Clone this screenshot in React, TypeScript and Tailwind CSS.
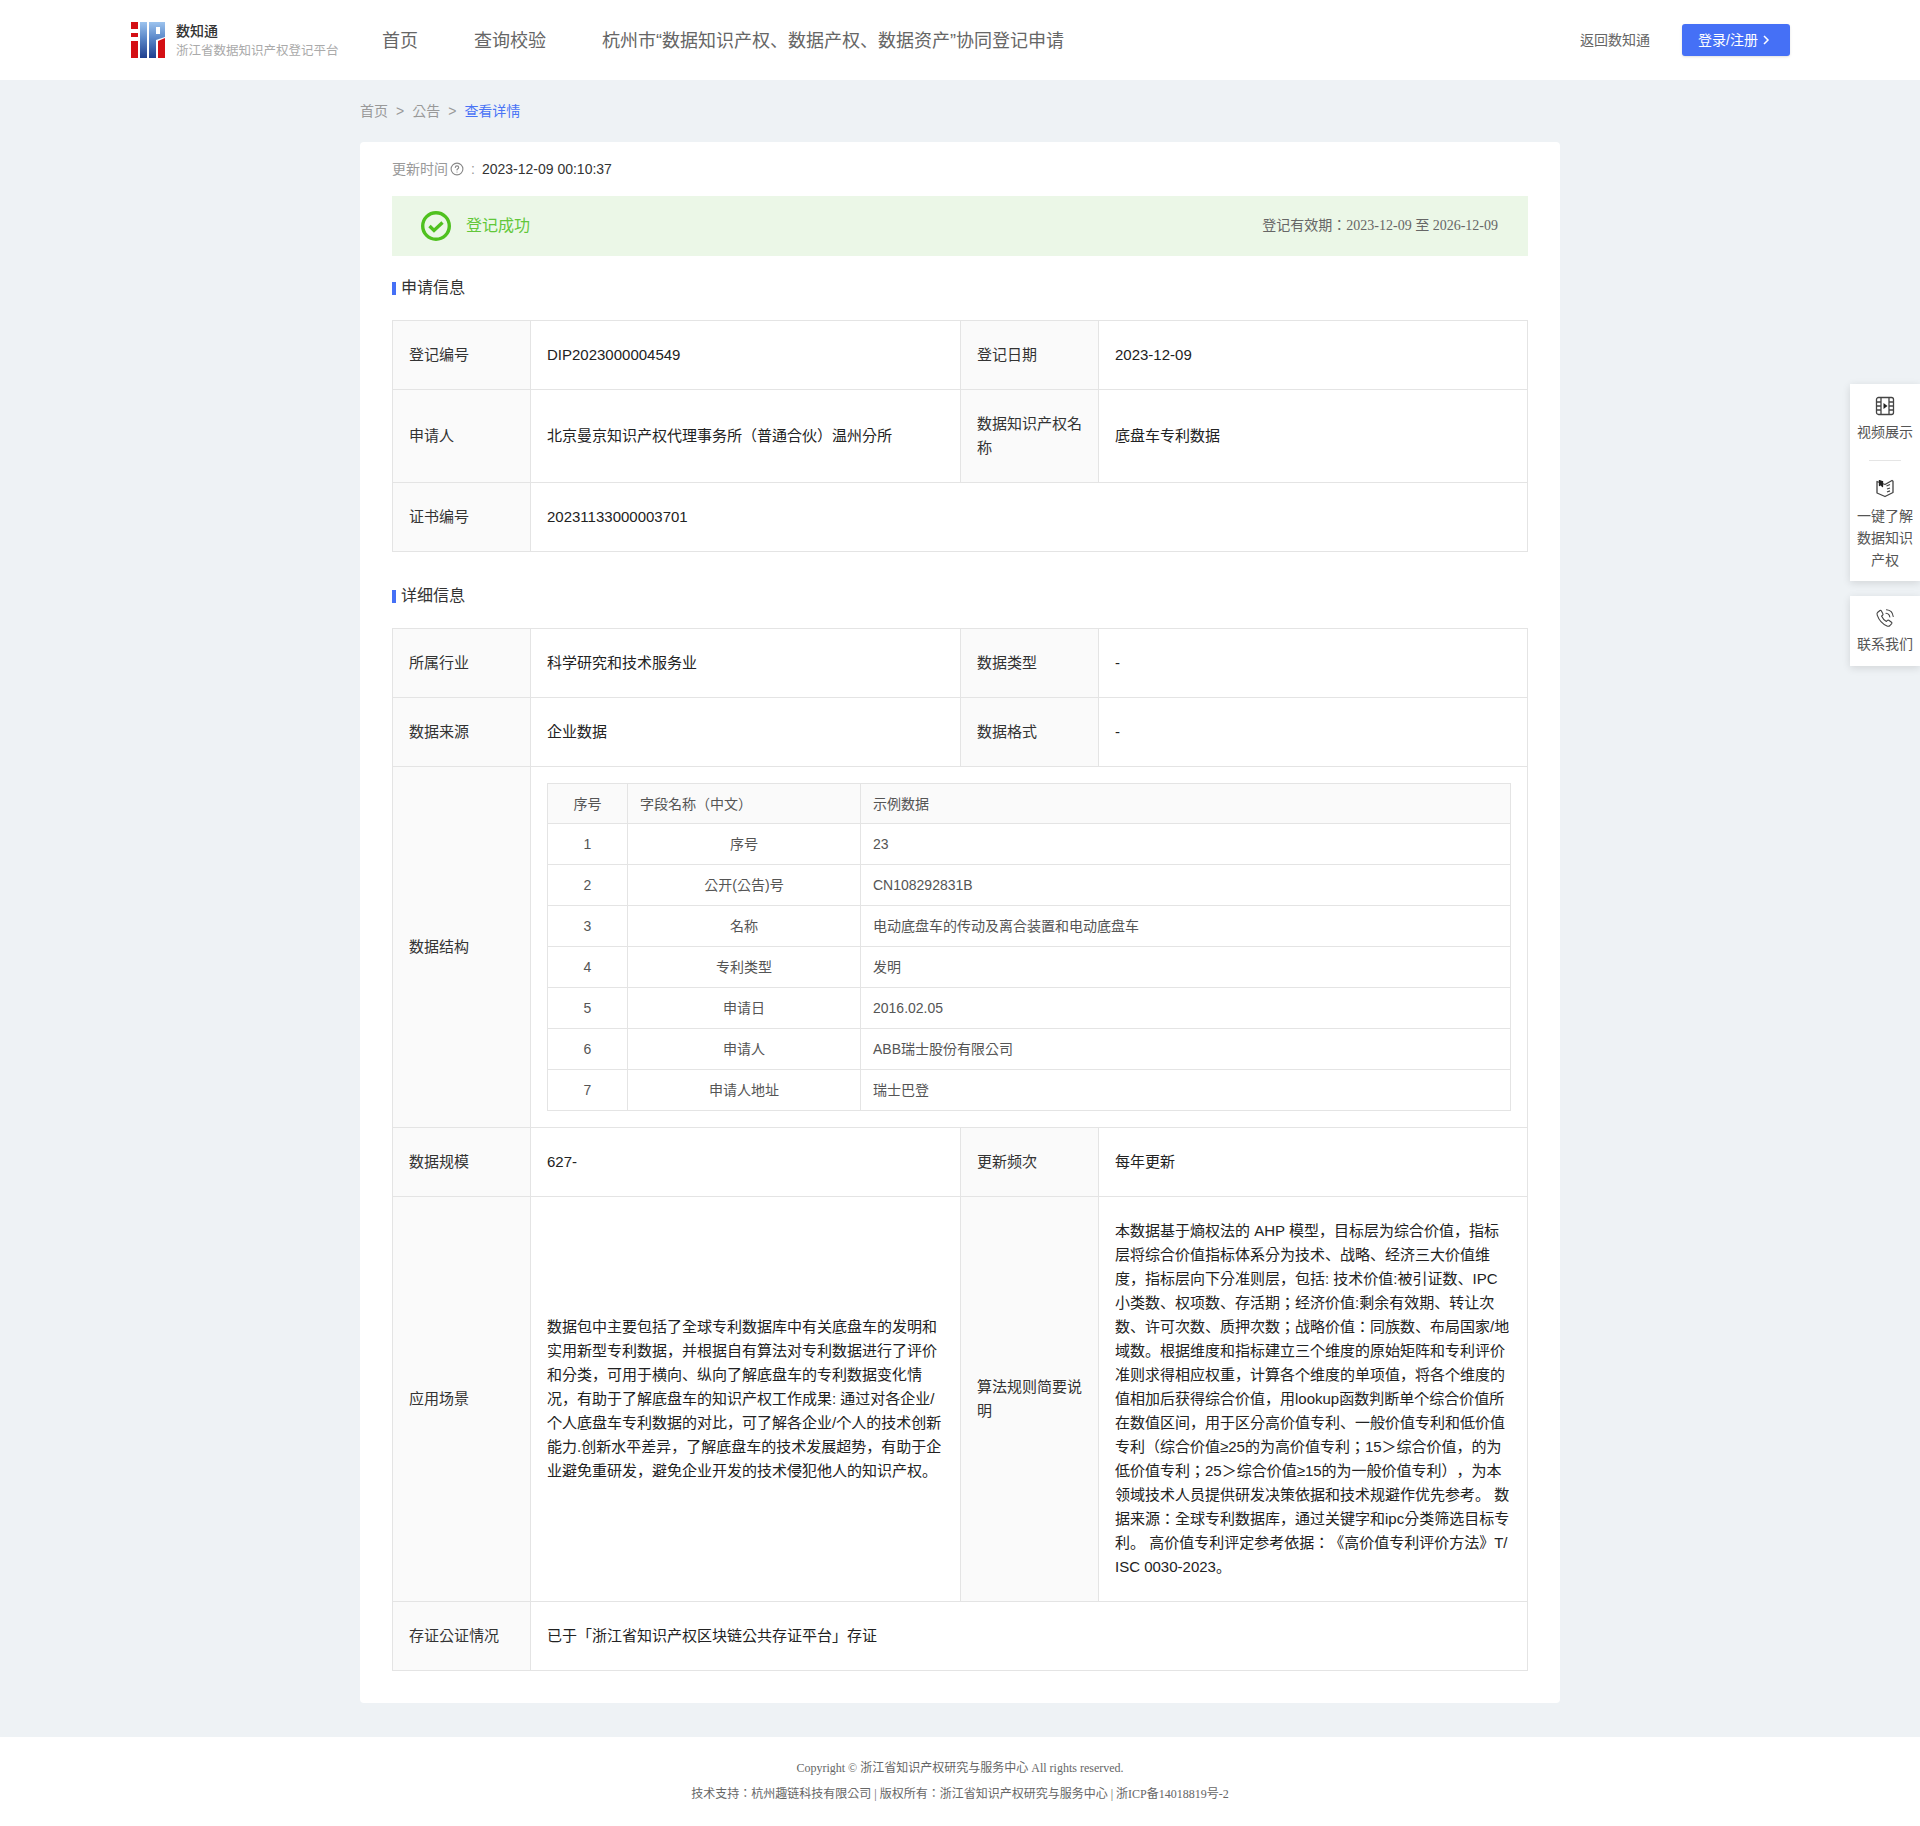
import React from "react";

const Th = ({ children, rowSpan, colSpan }: { children: React.ReactNode; rowSpan?: number; colSpan?: number }) => (
  <td rowSpan={rowSpan} colSpan={colSpan} className="border border-[#e4e4e4] bg-[#fafafa] px-4 py-[22px] text-[15px] leading-6 text-[#333] align-middle">{children}</td>
);
const Td = ({ children, colSpan }: { children: React.ReactNode; colSpan?: number }) => (
  <td colSpan={colSpan} className="border border-[#e4e4e4] bg-white px-4 py-[22px] text-[15px] leading-6 text-[#222] align-middle">{children}</td>
);

const Cols = () => (
  <colgroup>
    <col className="w-[138px]" />
    <col className="w-[430px]" />
    <col className="w-[138px]" />
    <col className="w-[429px]" />
  </colgroup>
);

const Section = ({ title }: { title: string }) => (
  <div className="flex items-center gap-[5px] h-6">
    <span className="w-1 h-[13px] bg-[#4570f6]" />
    <span className="text-base leading-6 text-[#333]">{title}</span>
  </div>
);

const fields: [string, string, string][] = [
  ["1", "序号", "23"],
  ["2", "公开(公告)号", "CN108292831B"],
  ["3", "名称", "电动底盘车的传动及离合装置和电动底盘车"],
  ["4", "专利类型", "发明"],
  ["5", "申请日", "2016.02.05"],
  ["6", "申请人", "ABB瑞士股份有限公司"],
  ["7", "申请人地址", "瑞士巴登"],
];

const Logo = () => (
  <svg width="34" height="36" viewBox="0 0 34 36" className="shrink-0">
    <defs>
      <linearGradient id="lg" x1="0" y1="0" x2="0" y2="1">
        <stop offset="0" stopColor="#9cc3ee" />
        <stop offset="0.45" stopColor="#5b88c9" />
        <stop offset="1" stopColor="#1f3f8f" />
      </linearGradient>
    </defs>
    <path d="M0 0h7v7H0zM0 11h7v4H0zM0 19h7v17H0z" fill="#d40f14" />
    <rect x="9" width="7" height="36" fill="url(#lg)" />
    <path fillRule="evenodd" d="M18 0h16v15l-9 3v18h-7zM25 5v7h4V5z" fill="url(#lg)" />
    <path d="M27 19l7-3v20h-7z" fill="#d40f14" />
  </svg>
);

const SideVideo = () => (
  <svg width="20" height="20" viewBox="0 0 20 20" fill="none" stroke="#444" strokeWidth="1.3">
    <rect x="1.500" y="1.500" width="17" height="17" rx="2" />
    <path d="M6 1.500v17M14 1.500v17M1.500 6H6M1.500 10H6M1.500 14H6M14 6h4.500M14 10h4.500M14 14h4.500" />
    <path d="M8.500 7l4 3-4 3z" fill="#222" stroke="none" />
  </svg>
);
const SideBook = () => (
  <svg width="20" height="20" viewBox="0 0 20 20" fill="none" stroke="#444" strokeWidth="1.3" strokeLinejoin="round">
    <path d="M2 3.500l8 3 7-4 1 .8v11.200l-8 4-8-3.500z" />
    <path d="M4.500 2v5.500l1.500-1 1.500 2V3" fill="#222" stroke="#222" />
    <path d="M11.500 8l3.500-1.500M12 11l3-1M12 14l3-1.200" />
  </svg>
);
const SidePhone = () => (
  <svg width="20" height="20" viewBox="0 0 20 20" fill="none" stroke="#444" strokeWidth="1.1" strokeLinecap="round" strokeLinejoin="round">
    <path d="M5 2.500L2.800 4.200c-.8.7-1 1.800-.6 3 1.600 4.500 5.500 9 9.800 10.800 1.200.5 2.300.2 3-.5l1.700-1.900c.4-.5.3-1-.2-1.400l-2.700-1.900c-.5-.3-1-.3-1.400.1l-1 1.100c-2-1-3.900-3.200-4.900-5.400l1.100-.9c.5-.4.600-.9.300-1.400L6.300 2.800c-.3-.5-.8-.6-1.300-.3z" />
    <path d="M11 5.200c2 .2 3.500 1.700 3.800 3.800M11.500 1.800c3.600.3 6.300 3.100 6.700 6.700" />
  </svg>
);

export default function App() {
  return (
    <div className="relative min-h-[1826px] bg-[#eef2f5] [font-family:'Liberation_Sans','Noto_Sans_CJK_KR',sans-serif] [text-spacing-trim:space-all] flex flex-col">
      <header className="h-20 bg-white flex items-center pl-[131px] pr-[130px]">
        <Logo />
        <div className="ml-[11px] mt-[1px] w-[164px] shrink-0">
          <div className="text-sm leading-[18px] font-medium text-[#333]">数知通</div>
          <div className="text-[12.5px] leading-[18px] mt-[2px] text-[#aaa] whitespace-nowrap">浙江省数据知识产权登记平台</div>
        </div>
        <nav className="ml-[42px] mt-[1px] flex gap-14 text-lg text-[#666]">
          <span>首页</span>
          <span>查询校验</span>
          <span>杭州市“数据知识产权、数据产权、数据资产”协同登记申请</span>
        </nav>
        <span className="ml-auto text-sm text-[#666]">返回数知通</span>
        <button className="ml-8 w-[108px] h-8 rounded-[3px] bg-[#4570f6] text-white text-sm flex items-center pl-4 gap-[3px] shadow-sm">
          登录/注册
          <svg width="10" height="12" viewBox="0 0 10 12" fill="none" stroke="white" strokeWidth="1.500"><path d="M3 2l4 4-4 4" /></svg>
        </button>
      </header>

      <main className="w-[1200px] mx-auto">
        <div className="h-[62px] flex items-center text-sm text-[#999]">
          <span>首页</span>
          <span className="mx-2">&gt;</span>
          <span>公告</span>
          <span className="mx-2">&gt;</span>
          <span className="text-[#4a74f5]">查看详情</span>
        </div>

        <div className="bg-white rounded-[4px] px-8 pb-8 pt-4">
          <div className="flex items-center h-[22px] text-sm">
            <span className="text-[#999]">更新时间</span>
            <svg width="14" height="14" viewBox="0 0 14 14" fill="none" stroke="#888" strokeWidth="1.100" className="ml-[2px]">
              <circle cx="7" cy="7" r="5.900" />
              <path d="M5.300 5.500c0-1 .8-1.600 1.700-1.600s1.700.6 1.700 1.500c0 1.300-1.700 1.300-1.700 2.600" strokeLinecap="round" />
              <circle cx="7" cy="10" r=".6" fill="#888" stroke="none" />
            </svg>
            <span className="text-[#999] ml-[7px]">:</span>
            <span className="ml-[7px] text-[#333]">2023-12-09 00:10:37</span>
          </div>

          <div className="mt-4 h-[60px] bg-[#ebf7e7] flex items-center pl-[29px] pr-[30px]">
            <svg width="30" height="30" viewBox="0 0 30 30" fill="none" stroke="#4fc11f">
              <circle cx="15" cy="15" r="13.300" strokeWidth="3.400" />
              <path d="M8.500 15l4.500 4.500 8.500-8" strokeWidth="3.400" />
            </svg>
            <span className="ml-[15px] text-base text-[#62c73a]">登记成功</span>
            <span className="ml-auto text-sm text-[#666] [font-family:'Liberation_Serif','Noto_Sans_CJK_KR',serif]">登记有效期：2023-12-09 至 2026-12-09</span>
          </div>

          <div className="mt-5 mb-5"><Section title="申请信息" /></div>

          <table className="w-[1135px] table-fixed border-collapse">
            <Cols />
            <tbody>
              <tr><Th>登记编号</Th><Td>DIP2023000004549</Td><Th>登记日期</Th><Td>2023-12-09</Td></tr>
              <tr><Th>申请人</Th><Td>北京曼京知识产权代理事务所（普通合伙）温州分所</Td><Th>数据知识产权名称</Th><Td>底盘车专利数据</Td></tr>
              <tr><Th>证书编号</Th><Td colSpan={3}>20231133000003701</Td></tr>
            </tbody>
          </table>

          <div className="mt-8 mb-5"><Section title="详细信息" /></div>

          <table className="w-[1135px] table-fixed border-collapse">
            <Cols />
            <tbody>
              <tr><Th>所属行业</Th><Td>科学研究和技术服务业</Td><Th>数据类型</Th><Td>-</Td></tr>
              <tr><Th>数据来源</Th><Td>企业数据</Td><Th>数据格式</Th><Td>-</Td></tr>
              <tr>
                <Th>数据结构</Th>
                <td colSpan={3} className="border border-[#e4e4e4] bg-white p-4">
                  <table className="w-[964px] table-fixed border-collapse text-sm text-[#555]">
                    <colgroup>
                      <col className="w-[80px]" />
                      <col className="w-[233px]" />
                      <col />
                    </colgroup>
                    <thead>
                      <tr className="h-[40px] bg-[#fafafa]">
                        <th className="border border-[#e4e4e4] font-normal text-center">序号</th>
                        <th className="border border-[#e4e4e4] font-normal text-left px-3">字段名称（中文）</th>
                        <th className="border border-[#e4e4e4] font-normal text-left px-3">示例数据</th>
                      </tr>
                    </thead>
                    <tbody>
                      {fields.map(([n, name, sample]) => (
                        <tr key={n} className="h-[41px]">
                          <td className="border border-[#e4e4e4] text-center">{n}</td>
                          <td className="border border-[#e4e4e4] text-center px-3">{name}</td>
                          <td className="border border-[#e4e4e4] px-3">{sample}</td>
                        </tr>
                      ))}
                    </tbody>
                  </table>
                </td>
              </tr>
              <tr><Th>数据规模</Th><Td>627-</Td><Th>更新频次</Th><Td>每年更新</Td></tr>
              <tr>
                <Th>应用场景</Th>
                <Td>数据包中主要包括了全球专利数据库中有关底盘车的发明和实用新型专利数据，并根据自有算法对专利数据进行了评价和分类，可用于横向、纵向了解底盘车的专利数据变化情况，有助于了解底盘车的知识产权工作成果: 通过对各企业/个人底盘车专利数据的对比，可了解各企业/个人的技术创新能力.创新水平差异，了解底盘车的技术发展超势，有助于企业避免重研发，避免企业开发的技术侵犯他人的知识产权。</Td>
                <Th>算法规则简要说明</Th>
                <Td>本数据基于熵权法的 AHP 模型，目标层为综合价值，指标层将综合价值指标体系分为技术、战略、经济三大价值维度，指标层向下分准则层，包括: 技术价值:被引证数、IPC 小类数、权项数、存活期；经济价值:剩余有效期、转让次数、许可次数、质押次数；战略价值：同族数、布局国家/地域数。根据维度和指标建立三个维度的原始矩阵和专利评价准则求得相应权重，计算各个维度的单项值，将各个维度的值相加后获得综合价值，用lookup函数判断单个综合价值所在数值区间，用于区分高价值专利、一般价值专利和低价值专利（综合价值≥25的为高价值专利；15＞综合价值，的为低价值专利；25＞综合价值≥15的为一般价值专利），为本领域技术人员提供研发决策依据和技术规避作优先参考。 数据来源：全球专利数据库，通过关键字和ipc分类筛选目标专利。 高价值专利评定参考依据：《高价值专利评价方法》T/<wbr />ISC 0030-2023。</Td>
              </tr>
              <tr><Th>存证公证情况</Th><Td colSpan={3}>已于「浙江省知识产权区块链公共存证平台」存证</Td></tr>
            </tbody>
          </table>
        </div>
      </main>

      <footer className="mt-[34px] h-[89px] bg-white pt-[18px] text-center text-xs leading-[26px] text-[#666] [font-family:'Liberation_Serif','Noto_Sans_CJK_KR',serif]">
        <div>Copyright © 浙江省知识产权研究与服务中心 All rights reserved.</div>
        <div>技术支持：杭州趣链科技有限公司 | 版权所有：浙江省知识产权研究与服务中心 | 浙ICP备14018819号-2</div>
      </footer>

      <aside className="absolute right-0 top-[384px] w-[70px] flex flex-col gap-[15px] text-sm text-[#555]">
        <div className="h-[197px] bg-white shadow-[0_2px_8px_rgba(0,0,0,0.12)] flex flex-col items-center pt-3">
          <SideVideo />
          <div className="mt-[5px] leading-[22px]">视频展示</div>
          <div className="mt-[17px] w-8 h-px bg-[#e5e5e5]" />
          <div className="mt-[17px]"><SideBook /></div>
          <div className="mt-[7px] leading-[22px] text-center w-14">一键了解数据知识产权</div>
        </div>
        <div className="h-[70px] bg-white shadow-[0_2px_8px_rgba(0,0,0,0.12)] flex flex-col items-center pt-3">
          <SidePhone />
          <div className="mt-[5px] leading-[22px]">联系我们</div>
        </div>
      </aside>
    </div>
  );
}
